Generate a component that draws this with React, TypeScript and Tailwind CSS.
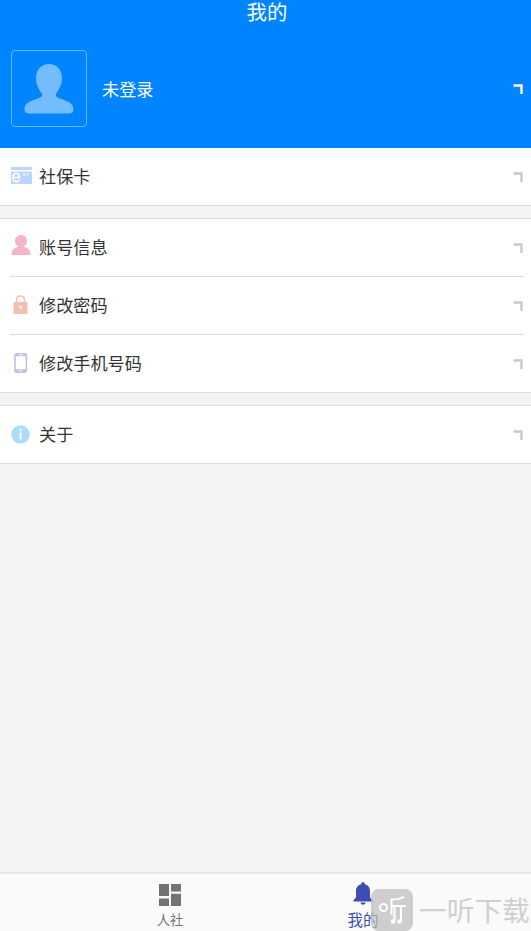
import type { ReactNode } from "react";

interface RowProps {
    icon: ReactNode;
    label: string;
}

// small corner mark at the end of every row
function Corner ({ className }: { className: string }) {
    return (
        <svg className={className} width="10" height="10" viewBox="0 0 10 10">
            <path d="M.5 1.5H8.5V10" fill="none" stroke="currentColor" strokeWidth="2.4"/>
        </svg>
    );
}

function Row ({ icon, label }: RowProps) {
    return (
        <div className="flex h-[57px] items-center pl-px pr-px">
            <div className="flex w-[28px] items-center">{icon}</div>
            <span className="-mt-px flex-1 text-[17.15px] leading-6">{label}</span>
            <Corner className="mt-px text-[#c9c9c9]"/>
        </div>
    );
}

function AvatarIcon () {
    return (
        <svg width="50" height="50" viewBox="0 0 50 50" fill="#73bdff">
            <path d="M25 0C32.5 0 38 5.5 38 14C38 22 34.5 26 32 30V32C35 36 49.5 36 49.5 45C49.5 48 48 49.5 45 49.5H5C2 49.5 .5 48 .5 45C.5 36 15 36 18 32V30C15.5 26 12 22 12 14C12 5.5 17.5 0 25 0Z"/>
        </svg>
    );
}

function CardIcon () {
    return (
        <svg className="-mt-[2px]" width="21" height="17" viewBox="0 0 21 17">
            <path d="M0 0H21V3H0ZM0 4.5H21V17H0Z" fill="#bcd5fa"/>
            <path d="M1 10.5H8.5C8.5 4.8 2 5.3 2 10.5C2 15.5 7 15.5 8.3 13M12 7.5H14.5M16 7.5H17.5" fill="none" stroke="#fff" strokeWidth="1.7"/>
        </svg>
    );
}

function PersonIcon () {
    return (
        <svg className="-mt-[5px]" width="20" height="20" viewBox="0 0 20 20" fill="#f5b5c9">
            <path d="M10 0C13.5 0 16 2.5 16 6C16 8.5 14.8 10.3 13 11.3V12C17 12.6 19.5 15 19.5 20H.5C.5 15 3 12.6 7 12V11.3C5.2 10.3 4 8.5 4 6C4 2.5 6.5 0 10 0Z"/>
        </svg>
    );
}

function LockIcon () {
    return (
        <svg className="ml-[2px] -mt-[3px]" width="15" height="19" viewBox="0 0 15 19">
            <path d="M3.5 8V5C3.5 -.4 11.5 -.4 11.5 5V8" fill="none" stroke="#f5bfae" strokeWidth="1.5"/>
            <rect x=".5" y="7" width="14" height="12" rx="1" fill="#f5bfae"/>
            <circle cx="7.5" cy="12.3" r="1.7" fill="#fdebe5"/>
        </svg>
    );
}

function PhoneIcon () {
    return (
        <svg className="ml-[3px] -mt-px" width="14" height="20" viewBox="0 0 14 20">
            <rect x=".2" width="13" height="20" rx="2.5" fill="#bfc1eb"/>
            <rect x="1.8" y="3.2" width="9.8" height="13" fill="#fff"/>
            <path d="M5 1.6H9M5.6 18H8" stroke="#fff"/>
        </svg>
    );
}

function InfoIcon () {
    return (
        <svg width="19" height="19" viewBox="0 0 19 19">
            <circle cx="9.5" cy="9.5" r="9.2" fill="#a9def8"/>
            <circle cx="9.5" cy="5" r="1.2" fill="#fff"/>
            <path d="M9.5 7.5V14.5" fill="none" stroke="#fff" strokeWidth="2"/>
        </svg>
    );
}

function DashboardIcon () {
    return (
        <svg width="22" height="22" viewBox="0 0 22 22" fill="#737373">
            <path d="M0 0H10V12H0ZM12 0H22V7.5H12ZM0 14.5H10V22H0ZM12 9.7H22V22H12Z"/>
        </svg>
    );
}

function BellIcon () {
    return (
        <svg width="20" height="23" viewBox="0 0 20 23" fill="#3f4db3">
            <path d="M8.2 2.2V1.8C8.2 -.4 11.8 -.4 11.8 1.8V2.2C15.5 3 17 6 17 9V15.5L19.5 18.3V19.5H.5V18.3L3 15.5V9C3 6 4.5 3 8.2 2.2ZM7.5 20.5H12.5C12.3 23.4 7.7 23.4 7.5 20.5Z"/>
        </svg>
    );
}

function Watermark () {
    return (
        <div className="absolute left-[371px] top-[889px] flex h-[42px] w-[160px] items-center">
            <svg className="shrink-0" width="42" height="42" viewBox="0 0 42 42">
                <rect width="42" height="42" rx="8" fill="#bdbdbd" fillOpacity=".72"/>
                <g fill="none" stroke="#fff" strokeWidth="2" strokeLinecap="round">
                    <circle cx="12.5" cy="18.5" r="3.6"/>
                    <path d="M32.5 8C29 10 24 10.5 20.5 10.5V25M20.5 17H34M23.5 18V32M30 18V32"/>
                </g>
                <circle cx="22" cy="32.5" r="2.3" fill="#fff"/>
                <circle cx="28.5" cy="32.5" r="2.3" fill="#fff"/>
            </svg>
            <span className="-mt-[2px] ml-[6px] whitespace-nowrap text-[27.7px] font-normal leading-[42px] text-[#cfcfcf]">一听下载</span>
        </div>
    );
}

export default function App () {
    return (
        <div className="relative flex h-[931px] w-[531px] flex-col bg-[#f3f3f3] font-['Noto_Sans_CJK_SC',sans-serif] text-[#333]">
            <header className="h-[148px] shrink-0 bg-[#0084ff] text-white">
                <h1 className="h-[50px] pl-[3px] text-center text-[20.4px] leading-[23px]">我的</h1>
                <div className="flex items-center pl-[11px] pr-[8px]">
                    <div className="flex h-[77px] w-[76px] items-center justify-center rounded-[4px] border-[1.5px] border-[#65b8ff]">
                        <AvatarIcon/>
                    </div>
                    <span className="ml-[15px] flex-1 text-[17.15px] leading-6">未登录</span>
                    <Corner className="text-white"/>
                </div>
            </header>
            <main className="flex-1">
                <section className="border-b border-[#dcdcdc] bg-white pl-[10px] pr-[7px]">
                    <Row icon={<CardIcon/>} label="社保卡"/>
                </section>
                <section className="mt-[12px] border-y border-[#dcdcdc] bg-white pl-[10px] pr-[7px]">
                    <Row icon={<PersonIcon/>} label="账号信息"/>
                    <div className="h-px bg-[#dcdcdc]"></div>
                    <Row icon={<LockIcon/>} label="修改密码"/>
                    <div className="h-px bg-[#dcdcdc]"></div>
                    <Row icon={<PhoneIcon/>} label="修改手机号码"/>
                </section>
                <section className="mt-[12px] border-y border-[#dcdcdc] bg-white pl-[10px] pr-[7px]">
                    <Row icon={<InfoIcon/>} label="关于"/>
                </section>
            </main>
            <nav className="flex h-[59px] shrink-0 justify-center border-t-2 border-[#e6e6e6] bg-[#fafafa] pl-[2px]">
                <div className="flex w-[193px] flex-col items-center pt-[10px]">
                    <DashboardIcon/>
                    <span className="mt-[4px] text-[13.3px] leading-5 text-[#737373]">人社</span>
                </div>
                <div className="flex w-[193px] flex-col items-center pt-[8px]">
                    <BellIcon/>
                    <span className="mt-[4px] text-[15.5px] leading-5 text-[#3f4db3]">我的</span>
                </div>
            </nav>
            <Watermark/>
        </div>
    );
}
